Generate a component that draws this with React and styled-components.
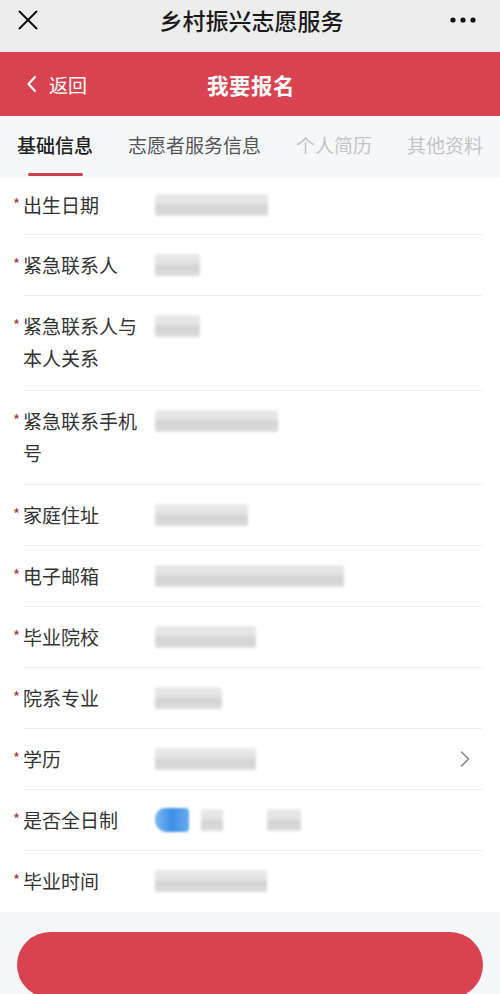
import React from "react";
import styled, { createGlobalStyle } from "styled-components";

const GlobalStyle = createGlobalStyle`
  html, body {
    margin: 0;
    padding: 0;
    background: #f5f6f8;
    font-family: "Noto Sans CJK SC", "Noto Sans", sans-serif;
  }
`;

const Page = styled.div`
  width: 500px;
  height: 994px;
  overflow: hidden;
  display: flex;
  flex-direction: column;
  background: #f5f6f8;
`;

const TopBar = styled.div`
  height: 52px;
  flex-shrink: 0;
  background: #ededed;
  display: flex;
  align-items: center;
  justify-content: space-between;
  padding: 0 24px 12px 15px;
  box-sizing: border-box;
`;

const TopTitle = styled.div`
  font-size: 23px;
  color: #1a1a1a;
  font-weight: 500;
  padding-left: 12px;
`;

const IconSlot = styled.div`
  width: 26px;
  height: 26px;
  display: flex;
  align-items: center;
  justify-content: center;
`;

const RedHeader = styled.div`
  height: 64px;
  flex-shrink: 0;
  background: #d8434f;
  display: grid;
  grid-template-columns: 1fr auto 1fr;
  align-items: center;
  color: #fff;
  padding: 0 24px 0 26px;
`;

const Back = styled.div`
  display: flex;
  align-items: center;
  gap: 12px;
  font-size: 19px;
`;

const HeaderTitle = styled.div`
  font-size: 21.5px;
  font-weight: 700;
  letter-spacing: 0.5px;
`;

const Tabs = styled.div`
  height: 62px;
  flex-shrink: 0;
  background: #f6f7f9;
  display: flex;
  align-items: center;
  justify-content: space-between;
  padding: 0 17px 4px 17px;
  box-sizing: border-box;
`;

const Tab = styled.div`
  position: relative;
  font-size: 19px;
  line-height: 26px;
  color: ${p => (p.$active ? "#222" : p.$muted ? "#c4c4c6" : "#555")};
  font-weight: ${p => (p.$active ? 500 : 400)};
  &::after {
    content: "";
    display: ${p => (p.$active ? "block" : "none")};
    position: absolute;
    left: 11px;
    right: 10px;
    bottom: -18px;
    height: 3.5px;
    border-radius: 2px;
    background: #c7444f;
  }
`;

const Form = styled.div`
  background: #fff;
  flex-shrink: 0;
`;

const Row = styled.div`
  display: flex;
  align-items: flex-start;
  min-height: ${p => (p.$tall ? 94.5 : 61)}px;
  padding: 14px 30px 0 10px;
  box-sizing: border-box;
  position: relative;
  &:first-child {
    min-height: 57px;
    padding-top: 11px;
  }
  &:not(:last-child)::after {
    content: "";
    position: absolute;
    left: 23px;
    right: 18px;
    bottom: 0;
    height: 1px;
    background: #eeeeee;
  }
`;

const Star = styled.span`
  width: 13px;
  color: #a8323c;
  font-size: 15px;
  line-height: 30px;
  flex-shrink: 0;
  text-align: center;
`;

const Label = styled.div`
  width: 132px;
  flex-shrink: 0;
  padding-right: 12px;
  box-sizing: border-box;
  font-size: 19px;
  line-height: 32px;
  color: #333;
`;

const Value = styled.div`
  flex: 1;
  display: flex;
  align-items: center;
  height: 32px;
`;

const Blur = styled.div`
  width: ${p => p.$w}px;
  height: 22px;
  border-radius: 2px;
  background: linear-gradient(
    180deg,
    #eaeaea 0%,
    #e2e2e2 45%,
    #d2d2d2 55%,
    #dcdcdc 100%
  );
  filter: blur(1.5px);
`;

const Gap = styled.div`
  width: ${p => p.$w}px;
`;

const BlueDot = styled.div`
  width: 34px;
  height: 24px;
  border-radius: 10px 4px 4px 12px;
  background: linear-gradient(90deg, #7fb7ef 0%, #3c8fe6 50%, #6aaaf0 100%);
  filter: blur(1px);
  margin-right: 12px;
`;

const Chevron = styled.div`
  margin-left: auto;
  display: flex;
  align-items: center;
`;

const Footer = styled.div`
  flex: 1;
  background: #f5f6f8;
  padding: 20px 17px 0;
`;

const Submit = styled.div`
  height: 66px;
  border-radius: 33px;
  background: #d8434f;
`;

const fields = [
  { label: "出生日期", w: 113 },
  { label: "紧急联系人", w: 45 },
  { label: "紧急联系人与本人关系", w: 45, tall: true },
  { label: "紧急联系手机号", w: 123, tall: true },
  { label: "家庭住址", w: 93 },
  { label: "电子邮箱", w: 189 },
  { label: "毕业院校", w: 101 },
  { label: "院系专业", w: 67 },
  { label: "学历", w: 101, select: true },
  { label: "是否全日制", radio: true },
  { label: "毕业时间", w: 112 },
];

const App = () => {
  return (
    <Page>
      <GlobalStyle />
      <TopBar>
        <IconSlot>
          <svg width="20" height="20" viewBox="0 0 20 20">
            <path d="M1.5 1.5 L18.5 18.5 M18.5 1.5 L1.5 18.5" stroke="#111" strokeWidth="2" strokeLinecap="round" />
          </svg>
        </IconSlot>
        <TopTitle>乡村振兴志愿服务</TopTitle>
        <IconSlot>
          <svg width="26" height="6" viewBox="0 0 26 6">
            <circle cx="3" cy="3" r="2.6" fill="#111" />
            <circle cx="13" cy="3" r="2.6" fill="#111" />
            <circle cx="23" cy="3" r="2.6" fill="#111" />
          </svg>
        </IconSlot>
      </TopBar>

      <RedHeader>
        <Back>
          <svg width="11" height="18" viewBox="0 0 11 18">
            <path d="M9 2 L2.5 9 L9 16" fill="none" stroke="#fff" strokeWidth="2.2" strokeLinecap="round" strokeLinejoin="round" />
          </svg>
          返回
        </Back>
        <HeaderTitle>我要报名</HeaderTitle>
        <div />
      </RedHeader>

      <Tabs>
        <Tab $active>基础信息</Tab>
        <Tab>志愿者服务信息</Tab>
        <Tab $muted>个人简历</Tab>
        <Tab $muted>其他资料</Tab>
      </Tabs>

      <Form>
        {fields.map(f => (
          <Row key={f.label} $tall={f.tall}>
            <Star>*</Star>
            <Label>{f.label}</Label>
            <Value>
              {f.radio ? (
                <>
                  <BlueDot />
                  <Blur $w={22} />
                  <Gap $w={44} />
                  <Blur $w={34} />
                </>
              ) : (
                <Blur $w={f.w} />
              )}
              {f.select && (
                <Chevron>
                  <svg width="10" height="18" viewBox="0 0 10 18">
                    <path d="M1.5 2 L8.5 9 L1.5 16" fill="none" stroke="#888" strokeWidth="1.6" strokeLinecap="round" strokeLinejoin="round" />
                  </svg>
                </Chevron>
              )}
            </Value>
          </Row>
        ))}
      </Form>

      <Footer>
        <Submit />
      </Footer>
    </Page>
  );
};

export default App;
